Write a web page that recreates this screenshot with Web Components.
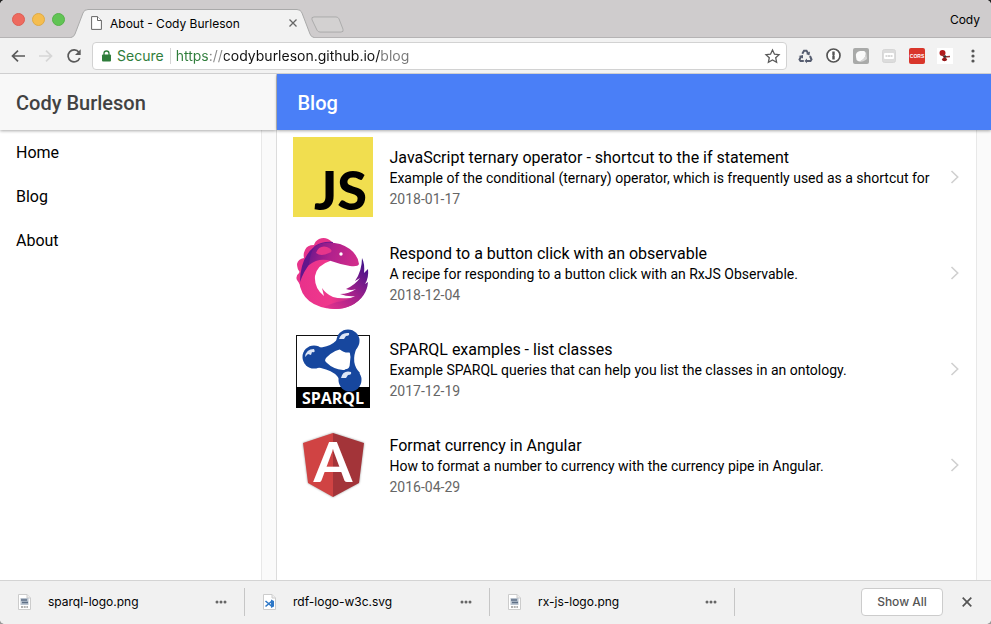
<!DOCTYPE html>
<html lang="en">
<head>
<meta charset="utf-8">
<meta name="viewport" content="width=device-width, initial-scale=1">
<title>About - Cody Burleson</title>
<style>
html, body { margin: 0; height: 100%; }
body { background: linear-gradient(#222 50%, #999 50%); font-family: Roboto, "Liberation Sans", sans-serif; color: #000; }
</style>
</head>
<body>
<browser-window></browser-window>
<script>
const UI = 'Inter, "Liberation Sans", sans-serif';
const RESET = `
  *, *::before, *::after { box-sizing: border-box; }
  button { font: inherit; color: inherit; background: none; border: 0; padding: 0; margin: 0; display: flex; align-items: center; justify-content: center; cursor: pointer; }
  svg { display: block; flex: none; overflow: visible; }
`;
function define(name, html, css, setup) {
  const template = document.createElement('template');
  template.innerHTML = `<style>${RESET}${css}</style>${html}`;
  customElements.define(name, class extends HTMLElement {
    constructor() {
      super();
      this.attachShadow({ mode: 'open' }).append(template.content.cloneNode(true));
    }
    connectedCallback() { if (setup) setup(this, this.shadowRoot); }
  });
}

/* Logos of the articles, on an 80 by 80 canvas */
const LOGOS = {
  js: `<rect width="80" height="80" fill="#f1de4f"/>
    <text x="21" y="73" font-family="Lato, sans-serif" font-weight="900" font-size="54">JS</text>`,
  rx: `<defs>
      <linearGradient id="body" x1="0" y1=".6" x2="1" y2=".6"><stop offset="0" stop-color="#e8318b"/><stop offset=".5" stop-color="#f0388c"/><stop offset="1" stop-color="#a3218b"/></linearGradient>
      <linearGradient id="head" x1="0" y1=".3" x2="1" y2=".5"><stop offset="0" stop-color="#6b178c"/><stop offset=".45" stop-color="#b0218c"/><stop offset="1" stop-color="#d02c8b"/></linearGradient>
      <linearGradient id="tail" x1="0" y1="1" x2=".8" y2="0"><stop offset="0" stop-color="#e9348c"/><stop offset=".5" stop-color="#a3218b"/><stop offset="1" stop-color="#43128a"/></linearGradient>
    </defs>
    <path fill="#e7348b" d="M39 9Q33 3 26 6Q22 8 21 12Q14 12 12 17Q10 21 11 25Q5 26 4 31Q4 36 7 39Q2 43 4 47L8 53L22 28Z"/>
    <path fill="url(#body)" d="M22 13Q5 27 6 48Q9 74 41 76Q61 76 70 62L57 65Q46 66 40 64Q33 61 29 55L31 63Q21 55 22 43Q24 32 37 28L40 9Q30 8 22 13Z"/>
    <path fill="#61168c" d="M7 49Q7 25 22 13Q30 8 40 9L36 20Q16 23 7 49Z"/>
    <path fill="url(#head)" d="M22 13Q33 7 47 11Q64 17 66 31Q65 34 57 33Q46 31 38 28Q26 24 16 32Q17 20 22 13Z"/>
    <path fill="#e6358b" d="M23 20Q26 12 34 14Q42 18 36 20Q28 24 23 20Z"/>
    <path fill="url(#tail)" d="M69 25Q72 31 71 40L75 36Q76 45 72 51L75 49Q74 64 59 72Q45 79 31 74Q37 71 44 69Q54 68 62 63Q55 64 47 61Q56 61 63 56Q58 58 53 56Q62 52 67 45L62 48Q69 38 69 25Z"/>
    <circle cx="48" cy="21" r="1.700" fill="#fff"/>`,
  sparql: `<rect x="3.500" y="6.500" width="73" height="72" fill="#fff" stroke="#111"/>
    <rect x="3" y="58" width="74" height="21" fill="#000"/>
    <path fill="#17479e" d="M20 19Q41 19 46 7L64 18Q57 34 67 44L49 58Q47 41 22 38Z"/>
    <path fill="#fff" d="M34 28Q43 19 53 20Q59 22 57 33Q57 42 50 41Q40 40 34 34Q30 31 34 28Z"/>
    <g fill="#17479e"><circle cx="21" cy="28" r="11.500"/><circle cx="55" cy="12" r="11.500"/><circle cx="57" cy="51" r="11.500"/></g>
    <g fill="#dde6f6"><path d="M12 28Q13 20 21 20Q23 24 19 23L18 26L15 25Z"/><path d="M46 10Q48 3 56 4Q57 7 53 7L51 10Z"/><path d="M48 49Q50 41 58 43Q59 46 55 46L53 49Z"/></g>
    <text x="40" y="75" text-anchor="middle" font-family="Open Sans, sans-serif" font-weight="700" font-size="16" fill="#fff">SPARQL</text>`,
  angular: `<g style="filter:drop-shadow(0 0 1px #0006)"><path fill="#d04343" d="M40 8L10 18L15 58L40 72Z"/><path fill="#a33439" d="M40 8L71 18L66 58L40 72Z"/></g>
    <text x="40" y="57" text-anchor="middle" font-family="Lato, sans-serif" font-weight="700" font-size="56" fill="#fff">A</text>`
};

define('traffic-lights', `<button aria-label="Close window"></button><button aria-label="Minimize window"></button><button aria-label="Zoom window"></button>`, `
  :host { display: flex; gap: 7px; padding: 1px 0 0 12px; align-items: center; }
  button { width: 13px; height: 13px; border-radius: 50%; background: #ee6a5f; border: 1px solid #dd5d53; }
  button:nth-of-type(2) { background: #f5bd4f; border-color: #deaa45; }
  button:nth-of-type(3) { background: #61c454; border-color: #56b14a; }
`);

define('browser-tab', `
  <svg class="shape" viewBox="0 0 244 29" preserveAspectRatio="none" aria-hidden="true"><path d="M0 28.500Q3 28 4 25L12 4Q13 .5 17 .5H226Q230 .5 231 4L239 25Q240 28 243 28.500V29H0Z" fill="#f2f2f2"/><path d="M0 28.500Q3 28 4 25L12 4Q13 .5 17 .5H226Q230 .5 231 4L239 25Q240 28 243 28.500" fill="none" stroke="#aaa"/></svg>
  <div class="row">
    <svg width="11" height="14" viewBox="0 0 11 14" fill="#fff" stroke="#666"><path d="M.6.6H6.500L10.400 4.500V13.400H.6Z"/><path d="M6.500.6V4.500H10.400"/></svg>
    <span><slot></slot></span>
    <button aria-label="Close tab"><svg width="8" height="8" viewBox="0 0 8 8" stroke="#666" stroke-width="1.300"><path d="M.5.5L7.500 7.500M7.500.5L.5 7.500"/></svg></button>
  </div>`, `
  :host { display: grid; width: 244px; height: 29px; font: 12px ${UI}; }
  .shape, .row { grid-area: 1 / 1; }
  .shape { width: 100%; height: 100%; }
  .row { display: flex; align-items: center; padding: 0 18px 1px 20px; gap: 8px; }
  span { flex: 1; white-space: nowrap; }
`);

define('tab-strip', `
  <traffic-lights></traffic-lights>
  <browser-tab>About - Cody Burleson</browser-tab>
  <button class="new" aria-label="New tab"><svg width="34" height="17" viewBox="0 0 34 18" preserveAspectRatio="none"><path d="M3 1H25Q27 1 28 3L32 14Q33 17 30 17H9Q7 17 6 15L1 4Q0 1 3 1Z" fill="#d3d1d1" stroke="#aaa"/></svg></button>
  <span>Cody</span>`, `
  :host { display: flex; height: 38px; background: #cfcccd; border-bottom: 1px solid #b5b3b4; font: 12px ${UI}; }
  browser-tab { margin: 9px 0 0 6px; }
  .new { margin: 11px 0 0 -4px; align-self: center; }
  span { margin: auto 11px auto auto; padding-top: 2px; }
`);

define('browser-toolbar', `
  <button aria-label="Back"><svg width="14" height="12" viewBox="0 0 14 12" fill="none" stroke="#5a5a5a" stroke-width="1.700"><path d="M14 6H1.500M7 .6L1.500 6L7 11.400"/></svg></button>
  <button aria-label="Forward" disabled><svg width="14" height="12" viewBox="0 0 14 12" fill="none" stroke="#d6d6d6" stroke-width="1.700"><path d="M0 6H12.500M7 .6L12.500 6L7 11.400"/></svg></button>
  <button aria-label="Reload"><svg width="14" height="14" viewBox="0 0 14 14"><path d="M11.900 3.300A6 6 0 1 0 12.700 9" fill="none" stroke="#5a5a5a" stroke-width="1.700"/><path d="M13.700.3V6H8Z" fill="#5a5a5a"/></svg></button>
  <div class="omni">
    <svg width="9" height="12" viewBox="0 0 9 12"><rect y="4.500" width="9" height="7" rx="1" fill="#2f7d3b"/><path d="M2 5V3.500A2.500 2.500 0 0 1 7 3.500V5" fill="none" stroke="#2f7d3b" stroke-width="1.300"/></svg>
    <label for="url">Secure</label>
    <input id="url" type="text" value="https://codyburleson.github.io/blog" spellcheck="false">
    <button aria-label="Bookmark this page"><svg width="15" height="14" viewBox="0 0 15 14" fill="none" stroke="#5a5a5a" stroke-width="1.300"><path d="M7.500 1L9.500 5.200L14 5.700L10.700 8.700L11.600 13.200L7.500 10.900L3.400 13.200L4.300 8.700L1 5.700L5.500 5.200Z"/></svg></button>
  </div>
  <div class="ext">
    <button aria-label="Recycle extension"><svg width="15" height="14" viewBox="0 0 15 14" fill="none" stroke="#565d70" stroke-width="2"><path d="M4.300 4.800L6 1.800H8.500L10.200 4.600"/><path d="M12 7L13.500 10.500L12.500 12H8.500"/><path d="M5.800 12H2.500L1.500 10.500L3.200 7.300"/><g fill="#565d70" stroke="none"><path d="M12 2.500L11.500 6.500L8 5Z"/><path d="M9 9.500V14.200L6.500 12Z"/><path d="M.6 7L5 6L5 9.500Z"/></g></svg></button>
    <button aria-label="Password extension"><svg width="15" height="15" viewBox="0 0 15 15"><circle cx="7.500" cy="7.500" r="6.500" fill="#fff" stroke="#555" stroke-width="1.700"/><path d="M6.300 3.500H8.700V6.800L8.200 7.500L8.700 8V11.500H6.300V8L6.800 7.500L6.300 6.800Z" fill="#555"/></svg></button>
    <button aria-label="Shell extension"><svg width="16" height="16" viewBox="0 0 16 16"><rect width="16" height="16" rx="2" fill="#a9aaa9"/><path d="M3 9Q2 4 7 3H11Q14 4 12 9Q9 14 5 13Q3 12 3 9Z" fill="#fafafa"/><path d="M13 3Q14 11 5 14Q11 14 14 11Z" fill="#d5d5d5"/></svg></button>
    <button aria-label="Box extension"><svg width="14" height="14" viewBox="0 0 14 14"><rect x=".5" y=".5" width="13" height="13" rx="2" fill="#dcdcdc" stroke="#d6d6d6"/><rect x="2" y="4" width="10" height="6" rx="1" fill="#fff"/><path d="M3.500 7H10.500" stroke="#d8d8d8" stroke-width="2" stroke-dasharray="2 .5"/></svg></button>
    <button aria-label="CORS extension"><svg width="16" height="16" viewBox="0 0 16 16"><rect width="16" height="16" rx="2" fill="#d9362b"/><text x="8" y="10" text-anchor="middle" font-family="Liberation Sans Narrow, Liberation Sans, sans-serif" font-size="5" font-weight="700" fill="#fff">CORS</text></svg></button>
    <button aria-label="Graph extension"><svg width="16" height="16" viewBox="0 0 16 16"><rect width="16" height="16" fill="#fff"/><circle cx="5.500" cy="5" r="3" fill="#b31a1c"/><path d="M5 6L8 11M7 9L13 8.500" stroke="#933" stroke-width="1.300"/><ellipse cx="7.500" cy="11.500" rx="2.500" ry="1.700" fill="#951517"/><circle cx="8" cy="8.500" r="1.300" fill="#333"/></svg></button>
    <button aria-label="Menu"><svg width="4" height="14" viewBox="0 0 4 14" fill="#555"><circle cx="2" cy="2" r="1.600"/><circle cx="2" cy="7" r="1.600"/><circle cx="2" cy="12" r="1.600"/></svg></button>
  </div>`, `
  :host { display: flex; align-items: center; height: 36px; padding: 0 4px; background: #f2f2f2; border-bottom: 1px solid #cfcfd0; }
  button { width: 28px; height: 28px; flex: none; }
  .omni { flex: 1; display: flex; align-items: center; height: 28px; margin: 0 4px; padding: 0 0 0 9px; background: #fff; border: 1px solid #d2d2d2; border-radius: 4px; font: 14px ${UI}; }
  label { color: #2f7d3b; margin-left: 6px; padding-right: 6px; border-right: 1px solid #d5d5d5; line-height: 16px; }
  input { flex: 1; min-width: 0; border: 0; outline: 0; padding: 0 0 0 5px; height: 20px; font: inherit; color: #111;
    background: linear-gradient(90deg, #2f7d3b 39px, #888 39px 53px, #111 53px 209px, #777 209px); -webkit-background-clip: text; background-clip: text; -webkit-text-fill-color: transparent; }
  .ext { display: flex; }
`);

define('page-header', `<h1><slot></slot></h1>`, `
  :host { display: flex; align-items: center; flex: none; height: 56px; padding: 2px 16px 0; background: var(--bar, #f8f8f8); color: var(--ink, #424242); box-shadow: 0 1px 3px #0005; position: relative; z-index: 1; }
  h1 { margin: 0; font-size: 20px; line-height: 24px; font-weight: 500; }
`);

define('side-menu', `
  <page-header>Cody Burleson</page-header>
  <nav><a href="#home">Home</a><a href="#blog">Blog</a><a href="#about">About</a></nav>`, `
  :host { display: flex; flex-direction: column; background: #fff; border-right: 1px solid #dcdcdc; }
  nav { flex: 1; margin-right: 14px; border-right: 1px solid #e8e8e8; box-shadow: 14px 0 #fafafa; }
  a { display: flex; align-items: center; height: 44px; padding: 0 16px; color: #000; text-decoration: none; font-size: 16px; }
`);

define('article-item', `
  <a href="#article">
    <svg class="logo" width="80" height="80" viewBox="0 0 80 80" aria-hidden="true"></svg>
    <div class="text"><h2><slot name="title"></slot></h2><p><slot></slot></p><time><slot name="date"></slot></time></div>
    <svg width="9" height="14" viewBox="0 0 9 14" fill="none" stroke="#d0d0d0" stroke-width="1.600"><path d="M1.500 1L7.700 7L1.500 13"/></svg>
  </a>`, `
  :host { display: block; }
  a { display: flex; align-items: center; padding: 7px 17px 9px 16px; color: #000; text-decoration: none; }
  .text { flex: 1; min-width: 0; margin: 2px 13px 0 16px; }
  h2, p { margin: 0; font-weight: 400; white-space: nowrap; overflow: hidden; }
  h2 { font-size: 16px; line-height: 21px; }
  p, time { font-size: 14px; line-height: 21px; }
  time { display: block; color: #666; }
`, (host, root) => { root.querySelector('.logo').innerHTML = LOGOS[host.getAttribute('logo')]; });

define('blog-page', `
  <page-header>Blog</page-header>
  <main>
    <article-item logo="js"><span slot="title">JavaScript ternary operator - shortcut to the if statement</span>Example of the conditional (ternary) operator, which is frequently used as a shortcut for<span slot="date">2018-01-17</span></article-item>
    <article-item logo="rx"><span slot="title">Respond to a button click with an observable</span>A recipe for responding to a button click with an RxJS Observable.<span slot="date">2018-12-04</span></article-item>
    <article-item logo="sparql"><span slot="title">SPARQL examples - list classes</span>Example SPARQL queries that can help you list the classes in an ontology.<span slot="date">2017-12-19</span></article-item>
    <article-item logo="angular"><span slot="title">Format currency in Angular</span>How to format a number to currency with the currency pipe in Angular.<span slot="date">2016-04-29</span></article-item>
  </main>`, `
  :host { display: flex; flex-direction: column; background: #fff; }
  page-header { --bar: #4a7ff7; --ink: #fff; padding-left: 20px; }
  main { flex: 1; min-height: 0; margin-right: 14px; border-right: 1px solid #e8e8e8; box-shadow: 14px 0 #fafafa; }
`);

define('download-item', `
  <svg width="13" height="16" viewBox="0 0 13 16" aria-hidden="true"><path d="M.5.5H9L12.500 4V15.500H.5Z" fill="#fff" stroke="#ccc"/><path d="M9 .5V4H12.500" fill="#eee" stroke="#ccc"/><g class="pic"></g></svg>
  <span><slot></slot></span>
  <button aria-label="Download options"><svg width="12" height="4" viewBox="0 0 12 4" fill="#666"><circle cx="2" cy="2" r="1.500"/><circle cx="6" cy="2" r="1.500"/><circle cx="10" cy="2" r="1.500"/></svg></button>`, `
  :host { display: flex; align-items: center; flex: 0 1 245px; height: 28px; padding: 0 17px 0 18px; border-right: 1px solid #c6c6c6; }
  span { flex: 1; margin-left: 17px; white-space: nowrap; }
`, (host, root) => {
  root.querySelector('.pic').innerHTML = host.getAttribute('kind') === 'svg'
    ? '<path d="M2.500 7L9 12.500M2.500 12.500L9 7" stroke="#2e78c7" stroke-width="1.600"/><path d="M8 5.500L11 7V12.500L8 14Z" fill="#2e78c7"/>'
    : '<rect x="2.500" y="4" width="8" height="7" fill="#b9c3cf"/><path d="M3 6H9M4 8.500H10" stroke="#5e6f86" stroke-width="1.300"/><path d="M3 13H10" stroke="#999" stroke-dasharray="2 .7" stroke-width="1.500"/>';
});

define('download-shelf', `
  <download-item kind="png">sparql-logo.png</download-item>
  <download-item kind="svg">rdf-logo-w3c.svg</download-item>
  <download-item kind="png">rx-js-logo.png</download-item>
  <button class="all">Show All</button>
  <button aria-label="Close downloads"><svg width="10" height="10" viewBox="0 0 10 10" stroke="#555" stroke-width="1.700"><path d="M.7.7L9.300 9.300M9.300.7L.7 9.300"/></svg></button>`, `
  :host { display: flex; align-items: center; flex: none; height: 44px; padding: 0 19px 2px 0; background: #f1f1f1; border-top: 1px solid #d4d4d4; font: 12px ${UI}; }
  .all { margin: 0 19px 0 auto; width: 82px; height: 28px; background: #fff; border: 1px solid #ccc; border-radius: 4px; color: #555; font-weight: 500; }
`);

define('browser-window', `
  <tab-strip></tab-strip><browser-toolbar></browser-toolbar>
  <div class="page"><side-menu></side-menu><blog-page></blog-page></div>
  <download-shelf></download-shelf>`, `
  :host { display: flex; flex-direction: column; height: 100vh; border-radius: 5px; overflow: hidden; background: #fff; }
  tab-strip, browser-toolbar { flex: none; }
  .page { flex: 1; min-height: 0; display: flex; overflow: hidden; }
  side-menu { flex: 0 0 28%; }
  blog-page { flex: 1; min-width: 0; }
`);
</script>
</body>
</html>
